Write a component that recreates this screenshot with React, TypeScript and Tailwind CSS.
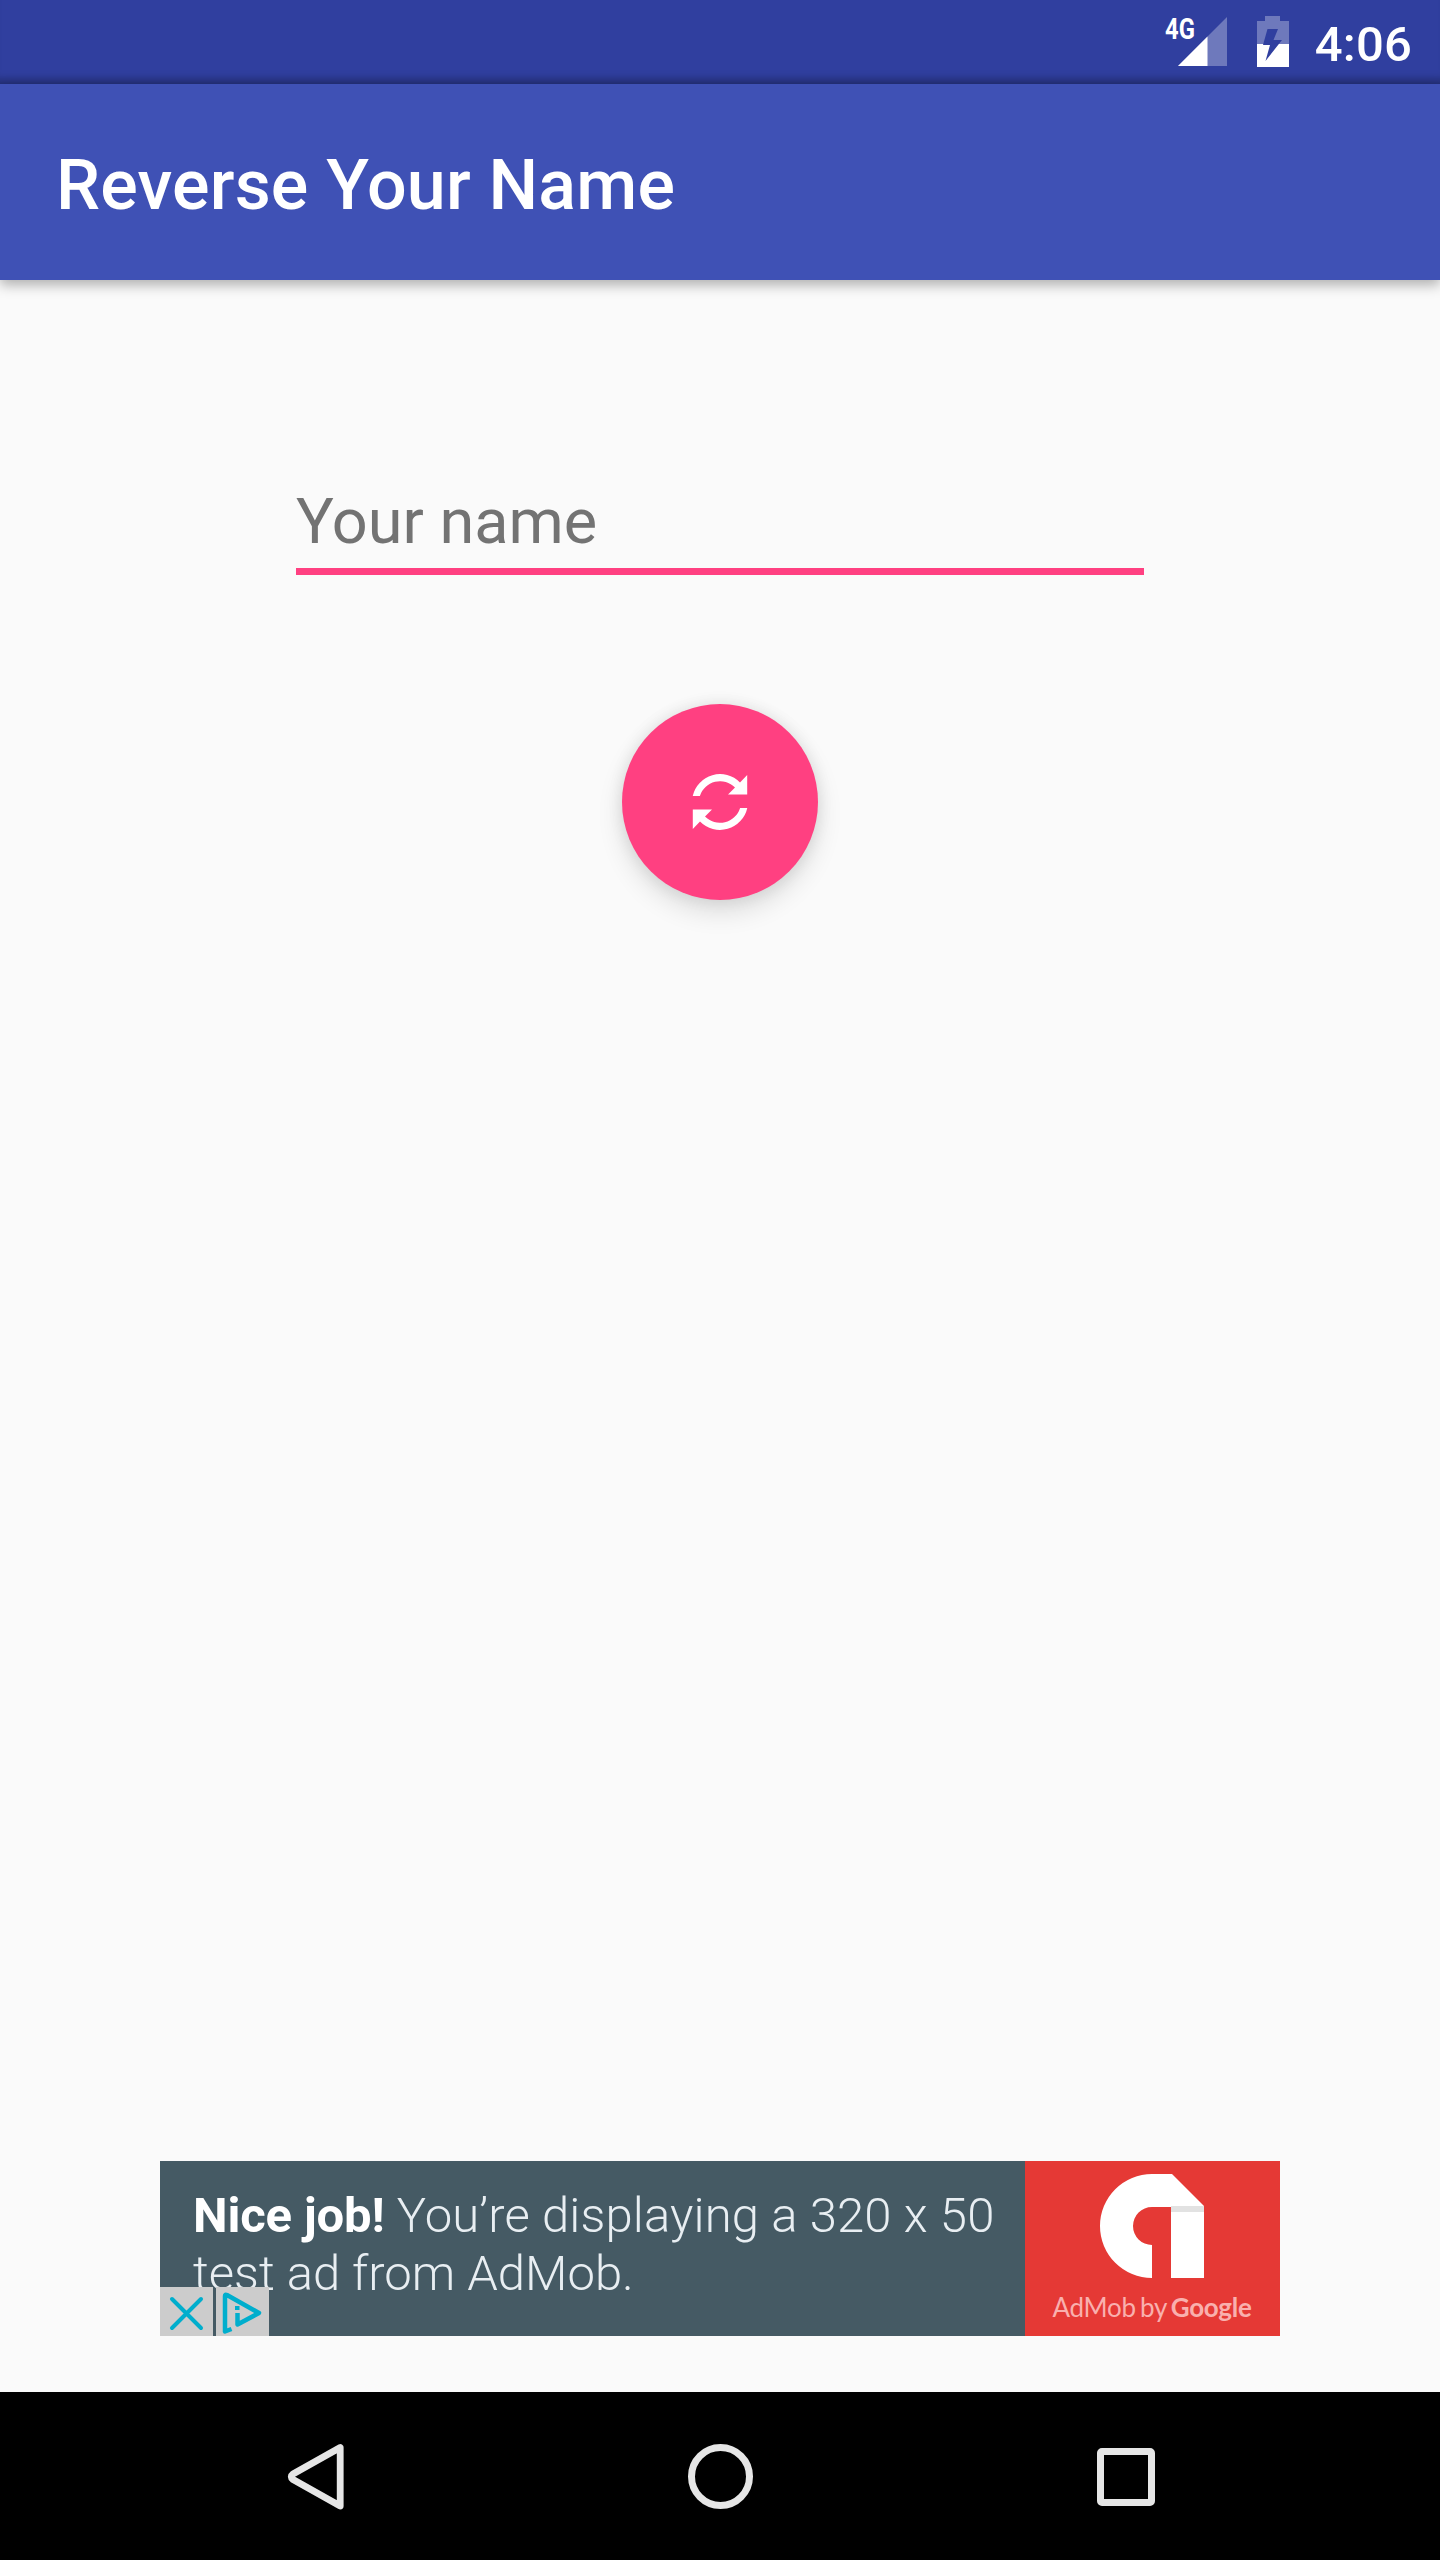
function StatusBar() {
  return (
    <div className="flex h-[84px] items-start justify-end bg-[#303f9f] pr-7 shadow-[inset_0_-12px_10px_-8px_rgba(0,0,0,0.3)]">
      <div className="relative mr-7 h-[84px] w-[62px]">
        <span className="absolute -left-px top-[13px] origin-left scale-x-[0.82] text-[29px] leading-[32px] font-bold">4G</span>
        <svg className="absolute left-[12px] top-[17px]" width="50" height="49" viewBox="0 0 50 49">
          <path d="M49 0V49H0Z" fill="#fff" fillOpacity=".3" />
          <path d="M29.500 19.500V49H0Z" fill="#fff" />
        </svg>
      </div>
      <svg className="mr-[25px] mt-4" width="34" height="51" viewBox="0 0 34 51">
        <path d="M9 0H24V5H33V28H1V5H9Z" fill="#fff" fillOpacity=".3" />
        <path d="M1 28H33V51H1Z" fill="#fff" />
        <path d="M11.500 13H22L17.500 24H26L9.500 45L14 29H7Z" fill="#303f9f" />
      </svg>
      <span className="mt-4 text-[49px] leading-[57px] font-medium tracking-[0.2px]">4:06</span>
    </div>
  );
}

function AdBanner() {
  return (
    <div className="relative flex h-[175px] w-[1120px] bg-[#455a64] text-[49px] leading-[58px] font-light text-[#e8eef2]">
      <div className="w-[865px] pl-[33px] pt-[26px] whitespace-nowrap">
        <p className="tracking-[0.15px]">
          <b className="font-bold tracking-[-0.15px] text-white">Nice job!</b> You’re displaying a 320 x 50
        </p>
        <p>test ad from AdMob.</p>
      </div>
      <div className="flex w-[255px] flex-col items-center bg-[#e53935] pt-[12px]">
        <svg width="105" height="106" viewBox="0 0 105 106">
          <path d="M52 105A52 52 0 0 1 52 1H72L104 33V105H71V34H52A19 19 0 0 0 52 72Z" fill="#fff" />
          <path d="M71 33H104V39H71Z" fill="#e2e2e2" />
        </svg>
        <p className="mt-[12px] -ml-px font-['Lato'] text-[26px] leading-[32px] font-normal tracking-[-0.3px] text-[#f9b0ae] [word-spacing:-2px]">
          AdMob by <span className="font-bold">Google</span>
        </p>
      </div>
      <div className="absolute bottom-0 left-0 flex gap-[3px]">
        <svg className="bg-[#cccccc]" width="53" height="49" viewBox="0 0 53 49">
          <path d="M12 12L41 41M41 12L12 41" stroke="#00aecd" strokeWidth="4" strokeLinecap="round" />
        </svg>
        <svg className="bg-[#cccccc]" width="53" height="49" viewBox="0 0 53 49">
          <path
            d="M15.500 42L9 44.500V9Q9 7 11 8L43 26L21.500 37.500V26"
            fill="none"
            stroke="#00aecd"
            strokeWidth="4.500"
            strokeLinejoin="round"
          />
          <path d="M19 19H23.500V23H19Z" fill="#00aecd" />
        </svg>
      </div>
    </div>
  );
}

export default function App() {
  return (
    <div className="flex h-[2560px] w-[1440px] flex-col bg-[#fafafa] font-['Roboto',sans-serif] text-white">
      <StatusBar />
      <header className="flex h-[196px] items-center bg-[#3f51b5] pt-[6px] pl-14 text-[70px] font-medium tracking-[0.2px] shadow-[0_5px_12px_rgba(0,0,0,0.3)]">
        Reverse Your Name
      </header>
      <main className="flex flex-1 flex-col items-center">
        <input
          className="mt-[196px] h-[99px] w-[848px] border-b-[7px] border-[#ff4081] pb-[2px] text-[63px] text-[#212121] outline-none placeholder:text-[#737373] placeholder:opacity-100"
          placeholder="Your name"
        />
        <button className="mt-[129px] flex size-[196px] items-center justify-center rounded-full bg-[#ff4081] shadow-[0_12px_26px_rgba(0,0,0,0.12),0_0_16px_rgba(0,0,0,0.09)]">
          <svg width="56" height="56" viewBox="0 0 56 56" fill="#fff">
            <path d="M.7 22A28 28 0 0 1 48 8.500L55.200 1V20.500H36L43 13.500A21 21 0 0 0 7.900 22Z" />
            <path d="M55.300 34A28 28 0 0 1 8 47.500L.8 55V35.500H20L13 42.500A21 21 0 0 0 48.100 34Z" />
          </svg>
        </button>
        <div className="mt-auto mb-14">
          <AdBanner />
        </div>
      </main>
      <nav className="flex h-[168px] items-center bg-black pl-[287px]">
        <svg width="58" height="67" viewBox="0 0 58 67" fill="none">
          <path d="M53.200 4.500V63L6 36.500Q2.500 33.700 6 31Z" stroke="#e6e6e6" strokeWidth="6.800" strokeLinejoin="round" />
        </svg>
        <div className="ml-[343px] size-[65px] rounded-full border-[7px] border-[#e6e6e6]" />
        <div className="mt-px ml-[344px] size-[58px] rounded-[5px] border-[7px] border-[#e6e6e6]" />
      </nav>
    </div>
  );
}
